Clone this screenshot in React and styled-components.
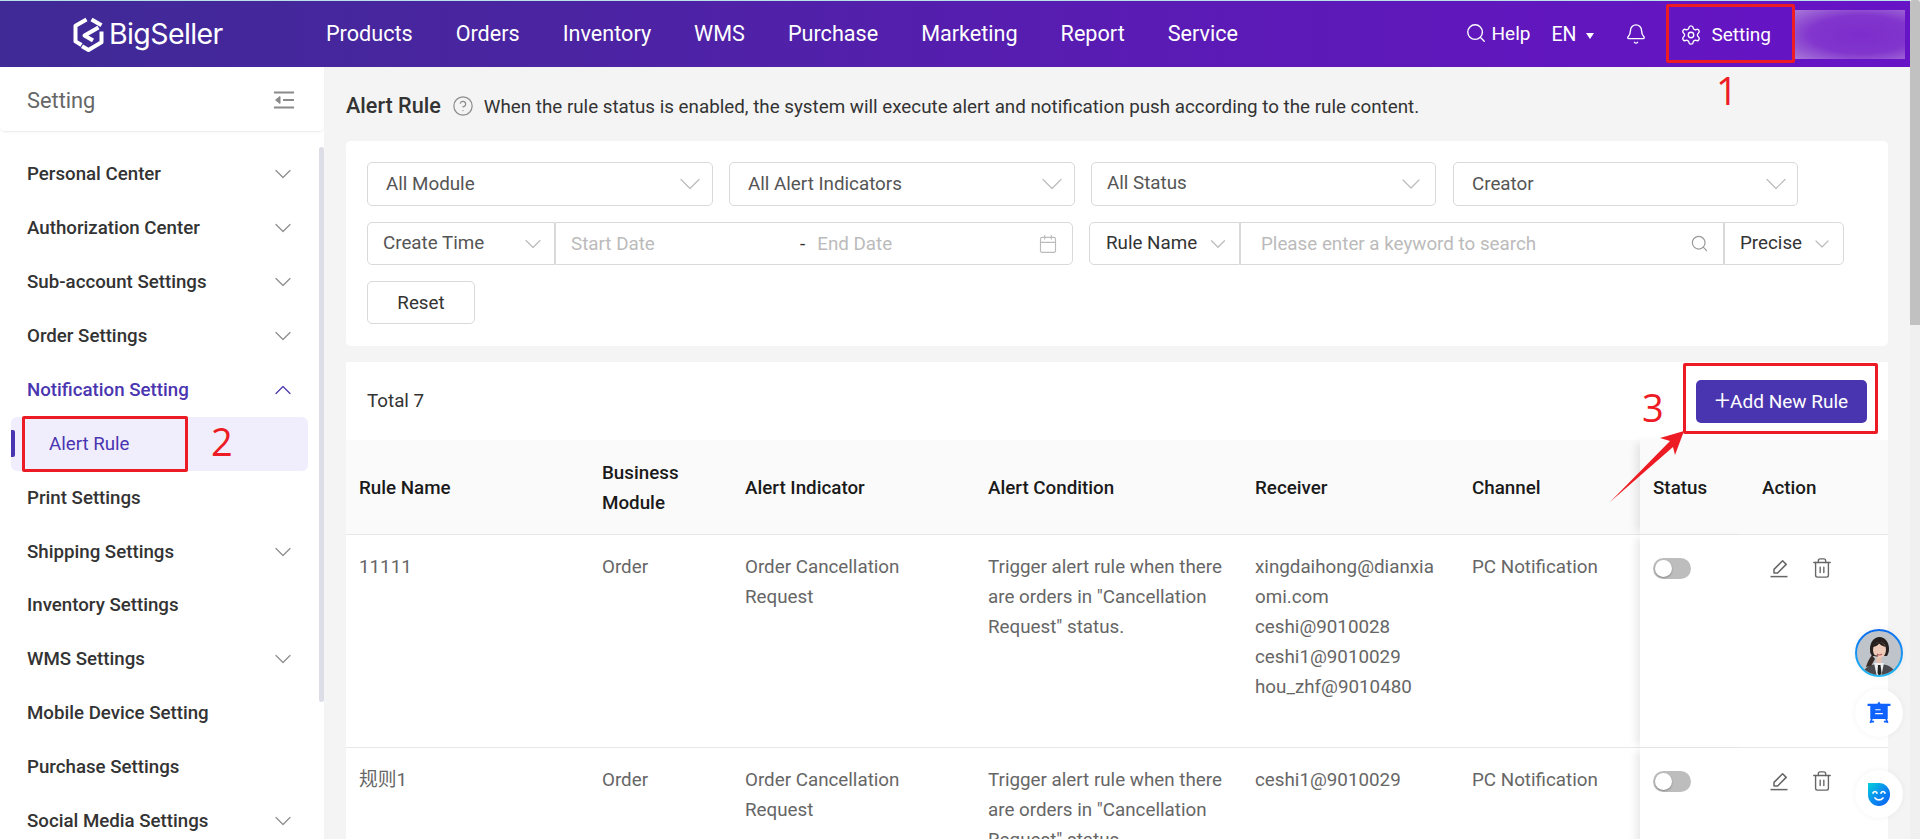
import React from "react";
import styled, { createGlobalStyle } from "styled-components";
import { Search, Bell, Settings, ChevronDown, ChevronUp, CircleHelp, Calendar, Trash2 } from "lucide-react";

const GlobalStyle = createGlobalStyle`
  html, body {
    margin: 0;
    height: 100%;
    overflow: hidden;
    background: #f4f4f4;
    font-family: Roboto, "Noto Sans CJK SC", sans-serif;
  }
  * {
    box-sizing: border-box;
  }
`;

const Shell = styled.div`
  position: relative;
  display: flex;
  height: 839px;
  overflow: hidden;
`;

const Page = styled.div`
  flex: 1;
  min-width: 0;
  display: flex;
  flex-direction: column;
`;

const PageScroll = styled.div`
  width: 10px;
  background: #f0f0f0;
`;

const PageThumb = styled.div`
  height: 325px;
  background: #c1c1c1;
  border-radius: 3px 3px 0 0;
`;

/* top bar */
const TopBar = styled.header`
  height: 67px;
  flex: none;
  display: flex;
  align-items: center;
  padding-left: 73px;
  padding-right: 5px;
  border-top: 1px solid #b8e2e8;
  background: linear-gradient(90deg, #3f2a96 0%, #4b24a2 30%, #5a1bb4 60%, #6713c6 100%);
  color: #fff;
`;

const Logo = styled.div`
  width: 253px;
  flex: none;
  display: flex;
  align-items: center;
  gap: 5px;
`;

const LogoText = styled.span`
  font-family: Inter, sans-serif;
  font-size: 28.5px;
  letter-spacing: -0.6px;
  line-height: 1;
`;

const Nav = styled.nav`
  display: flex;
  gap: 43px;
`;

const NavItem = styled.a`
  font-size: 21.6px;
  line-height: 28px;
  color: #fff;
`;

const TopRight = styled.div`
  margin-left: auto;
  display: flex;
  align-items: center;
`;

const HelpLink = styled.span`
  display: flex;
  align-items: center;
  gap: 5px;
  font-size: 19px;
  margin-right: 21px;
  margin-top: -2px;
`;

const LangPick = styled.span`
  display: flex;
  align-items: center;
  gap: 10px;
  font-size: 19.5px;
  margin-right: 31px;
`;

const Caret = styled.i`
  width: 0;
  height: 0;
  border-left: 4.5px solid transparent;
  border-right: 4.5px solid transparent;
  border-top: 6px solid #fff;
  margin-top: 3px;
`;

const SettingLink = styled.span`
  display: flex;
  align-items: center;
  gap: 9px;
  font-size: 19px;
  margin-left: 33px;
  margin-right: 24px;
  margin-top: 1px;
`;

const BlurBlock = styled.div`
  width: 110px;
  height: 49px;
  background: radial-gradient(ellipse at 60% 50%, #7d2ccc 0%, #8236cd 55%, #a878d8 100%);
`;

/* body */
const Body = styled.div`
  flex: 1;
  display: flex;
  min-height: 0;
`;

const Sidebar = styled.aside`
  position: relative;
  width: 324px;
  flex: none;
  background: #fff;
`;

const SideHead = styled.div`
  height: 65px;
  display: flex;
  align-items: center;
  justify-content: space-between;
  padding: 2px 30px 0 27px;
  border-bottom: 1px solid #eee;
  border-radius: 0 0 5px 5px;
  box-shadow: 0 1px 2px rgba(0, 0, 0, 0.03);
  font-size: 21.8px;
  color: #666;
`;

const SideList = styled.div`
  padding: 15px 0 0 0;
`;

const SideItem = styled.div`
  height: 53.95px;
  display: flex;
  align-items: center;
  justify-content: space-between;
  padding: 0 27px 0 27px;
  font-size: 18.7px;
  font-weight: 500;
  color: ${(p) => (p.$active ? "#4a35b0" : "#333")};
`;

const SubItem = styled.div`
  position: relative;
  height: 53.95px;
  margin: 0 16px 0 11px;
  display: flex;
  align-items: center;
  padding-left: 38px;
  border-radius: 6px;
  background: #f0eefc;
  color: #4a35b0;
  font-size: 18.7px;

  &::before {
    content: "";
    position: absolute;
    left: 0;
    top: 13px;
    width: 4px;
    height: 27px;
    border-radius: 0 2px 2px 0;
    background: #4a35b0;
  }
`;

const SideThumb = styled.div`
  position: absolute;
  top: 80px;
  right: 0;
  width: 5px;
  height: 555px;
  background: #dcdde6;
  border-radius: 3px;
`;

const Main = styled.main`
  flex: 1;
  min-width: 0;
  padding: 0 22px;
`;

const TitleRow = styled.div`
  height: 74px;
  display: flex;
  align-items: center;
  padding-top: 3px;
  color: #333;
`;

const Title = styled.h1`
  margin: 0 11px 0 0;
  font-size: 21.6px;
  font-weight: 500;
  color: #333;
`;

const TitleHint = styled.span`
  margin-left: 10px;
  margin-top: 2px;
  font-size: 18.8px;
  color: #333;
`;

const FilterCard = styled.section`
  height: 205px;
  padding: 21px;
  background: #fff;
  border-radius: 5px;
  margin-bottom: 16px;
`;

const FilterRow = styled.div`
  display: flex;
  margin-bottom: 16px;
`;

const Field = styled.div`
  height: ${(p) => (p.$tall ? 44 : 43)}px;
  width: ${(p) => p.$w}px;
  flex: none;
  display: flex;
  align-items: center;
  justify-content: space-between;
  margin-right: ${(p) => p.$gap || 0}px;
  padding: 0 ${(p) => p.$pr ?? 16}px 0 ${(p) => p.$pl || 18}px;
  border: 1px solid #d9d9d9;
  border-radius: ${(p) => p.$radius || "5px"};
  background: #fff;
  font-size: 18.8px;
  color: ${(p) => p.$color || "#555"};
`;

const FieldLabel = styled.span`
  margin-top: ${(p) => p.$lift || 0}px;
`;

const Muted = styled.span`
  color: #bbb;
`;

const StartText = styled(Muted)`
  width: 227px;
`;

const EndText = styled(Muted)`
  margin-left: 12px;
`;

const DateDash = styled.span`
  margin-left: 2px;
  color: #333;
`;

const DateGroup = styled.div`
  display: flex;
  align-items: center;
`;

const ResetBtn = styled.button`
  width: 108px;
  height: 43px;
  padding: 0;
  border: 1px solid #d9d9d9;
  border-radius: 5px;
  background: #fff;
  color: #333;
  font: 18.8px Roboto, sans-serif;
`;

const TableCard = styled.section`
  background: #fff;
`;

const TableBar = styled.div`
  height: 78px;
  display: flex;
  align-items: center;
  justify-content: space-between;
  padding: 0 21px;
  font-size: 18.8px;
  color: #333;
`;

const TotalLabel = styled.span`
  margin-top: -1px;
`;

const AddBtn = styled.button`
  width: 171px;
  height: 43px;
  padding: 0;
  display: flex;
  align-items: center;
  justify-content: center;
  border: none;
  border-radius: 5px;
  background: #4a35b0;
  color: #fff;
  font: 19px Roboto, sans-serif;
`;

const PlusSign = styled.span`
  font-size: 27px;
  font-weight: 300;
  line-height: 27px;
`;

const Grid = styled.table`
  width: 100%;
  table-layout: fixed;
  border-collapse: separate;
  border-spacing: 0;
`;

const Head = styled.th`
  height: 95px;
  padding: 2px 13px 0;
  text-align: left;
  vertical-align: middle;
  background: #fafafa;
  border-bottom: 1px solid #e8e8e8;
  font-size: 18.8px;
  font-weight: 500;
  line-height: 30px;
  color: #1a1a1a;
  box-shadow: ${(p) => (p.$pinned ? "-7px 0 8px -3px rgba(0,0,0,.09)" : "none")};
`;

const Cell = styled.td`
  padding: 17px ${(p) => (p.$breakAll ? 15 : 13)}px 45px 13px;
  vertical-align: top;
  background: #fff;
  border-bottom: 1px solid #e8e8e8;
  font-size: 18.8px;
  line-height: 30px;
  color: #666;
  word-break: ${(p) => (p.$breakAll ? "break-all" : "normal")};
  box-shadow: ${(p) => (p.$pinned ? "-7px 0 8px -3px rgba(0,0,0,.09)" : "none")};
`;

const Toggle = styled.span`
  display: block;
  position: relative;
  width: 38px;
  height: 21px;
  margin-top: 6px;
  border-radius: 11px;
  background: #bdbdbd;

  &::after {
    content: "";
    position: absolute;
    left: 2px;
    top: 2px;
    width: 17px;
    height: 17px;
    border-radius: 50%;
    background: #fff;
    box-shadow: 0 1px 2px rgba(0, 0, 0, 0.3);
  }
`;

const Actions = styled.div`
  display: flex;
  align-items: center;
  gap: 22px;
  margin: 5px 0 0 7px;
  color: #666;
`;

/* floating widgets */
const FloatDock = styled.div`
  position: absolute;
  right: 17px;
  top: 629px;
  display: flex;
  flex-direction: column;
  align-items: center;
`;

const FloatBtn = styled.div`
  width: 48px;
  height: 48px;
  margin-top: ${(p) => p.$mt || 0}px;
  display: flex;
  align-items: center;
  justify-content: center;
  border-radius: 50%;
  background: #fff;
  box-shadow: 0 0 6px rgba(0, 0, 0, 0.05);
`;

/* red callouts drawn over the page */
const RedBox = styled.div`
  position: absolute;
  border: 3px solid #ed1c24;
  border-radius: 2px;
`;

const Mark1 = styled(RedBox)`
  left: 1666px;
  top: 4px;
  width: 129px;
  height: 59px;
`;

const Mark2 = styled(RedBox)`
  left: 22px;
  top: 416px;
  width: 166px;
  height: 56px;
`;

const Mark3 = styled(RedBox)`
  left: 1683px;
  top: 363px;
  width: 195px;
  height: 71px;
`;

const RedNum = styled.span`
  position: absolute;
  left: ${(p) => p.$x}px;
  top: ${(p) => p.$y}px;
  font-family: "Open Sans", sans-serif;
  font-size: 38px;
  line-height: 38px;
  color: #ed1c24;
`;

const ArrowSvg = styled.svg`
  position: absolute;
  left: 1605px;
  top: 425px;
`;

const navItems = ["Products", "Orders", "Inventory", "WMS", "Purchase", "Marketing", "Report", "Service"];

const menu = [
  { label: "Personal Center", arrow: true },
  { label: "Authorization Center", arrow: true },
  { label: "Sub-account Settings", arrow: true },
  { label: "Order Settings", arrow: true },
  { label: "Notification Setting", open: true },
  { label: "Print Settings" },
  { label: "Shipping Settings", arrow: true },
  { label: "Inventory Settings" },
  { label: "WMS Settings", arrow: true },
  { label: "Mobile Device Setting" },
  { label: "Purchase Settings" },
  { label: "Social Media Settings", arrow: true },
];

const rules = [
  {
    name: "11111",
    module: "Order",
    indicator: "Order Cancellation Request",
    condition: 'Trigger alert rule when there are orders in "Cancellation Request" status.',
    receivers: ["xingdaihong@dianxiaomi.com", "ceshi@9010028", "ceshi1@9010029", "hou_zhf@9010480"],
    channel: "PC Notification",
  },
  {
    name: "规则1",
    module: "Order",
    indicator: "Order Cancellation Request",
    condition: 'Trigger alert rule when there are orders in "Cancellation Request" status.',
    receivers: ["ceshi1@9010029"],
    channel: "PC Notification",
  },
];

const colWidths = [243, 143, 243, 267, 217, 181, 109, 139];

const BrandMark = () => (
  <svg width="31" height="35" viewBox="0 0 31 35" fill="none" stroke="#fff" strokeWidth="4" strokeLinejoin="round">
    <path d="M13.5 2.5 2.5 8.8v15.6l6 3.6" />
    <path d="M18.5 2.5 28.5 8.3" />
    <path d="M25.5 10.5 11.5 18.5l8.5 5" />
    <path d="M28.5 14.5v10.8L15.5 33l-6.5-3.8" />
  </svg>
);

const CollapseIcon = () => (
  <svg width="20" height="18" viewBox="0 0 20 18" fill="none" stroke="#8a8a8a" strokeWidth="1.8">
    <path d="M0 1.5h20M9 9h11M0 16.5h20" />
    <path d="M6 5.5 1.5 9 6 12.5z" fill="#8a8a8a" strokeWidth="1" />
  </svg>
);

const EditIcon = () => (
  <svg width="20" height="20" viewBox="0 0 20 20" fill="none" stroke="currentColor" strokeWidth="1.5" strokeLinejoin="round">
    <path d="M5 15v-3.6L13.6 2.8l3.6 3.6L8.6 15z" />
    <path d="M1.5 18.6h17" />
  </svg>
);

const Agent = () => (
  <svg width="48" height="48" viewBox="0 0 48 48">
    <defs>
      <linearGradient id="agentRing" x1="0" y1="0" x2="0" y2="1">
        <stop offset="0" stopColor="#0a6cf0" />
        <stop offset="1" stopColor="#22b8f5" />
      </linearGradient>
      <clipPath id="agentClip">
        <circle cx="24" cy="24" r="22" />
      </clipPath>
    </defs>
    <circle cx="24" cy="24" r="23" fill="#bfc4cb" stroke="url(#agentRing)" strokeWidth="2" />
    <g clipPath="url(#agentClip)">
      <path d="M7 48c1-9 7-13 17-13s16 4 17 13z" fill="#4a4a4e" />
      <path d="M19 34h10l-3 14h-4z" fill="#eceef0" />
      <path d="M23 36h2.5l1 8-2 4-2-4z" fill="#222" />
      <path d="M15 20c0-7 4-12 9.5-12S34 13 34 20c0 3-1 5-2 7H17c-1-2-2-4-2-7z" fill="#26201e" />
      <path d="M17 26c-3 4-5 8-6 12l5-1 4-7z" fill="#3a2c26" />
      <rect x="21.5" y="26" width="5" height="8" fill="#e6bfae" />
      <ellipse cx="24.5" cy="21" rx="6.5" ry="8" fill="#eecab8" />
      <path d="M17.5 18c2-4 5-5.5 7.5-5 2.500 0 4.500 2 5.500 5-3-1-5-2-6.500-3.500-1 2-3 3-6.500 3.500z" fill="#26201e" />
      <path d="M22 25c1.5 1.2 3.5 1.2 5 0" stroke="#b8555a" strokeWidth="1.1" fill="none" />
      <path d="M16 22c-1 3 2 5 7 5" stroke="#222" strokeWidth="1" fill="none" />
    </g>
  </svg>
);

const BoardIcon = () => (
  <svg width="24" height="24" viewBox="0 0 22 22">
    <path d="M11 0.5 12.5 2.5H21.5V4.5H19V16.5H3V4.5H0.500V2.5H9.500z" fill="#0f62fe" />
    <path d="M7.5 8h5M7.5 11.5h7" stroke="#fff" strokeWidth="1.1" />
    <path d="M4.500 16.500 3 20M4 19h2.500M17.500 16.500l1.500 3.500M18 19h-2.500" stroke="#0f62fe" strokeWidth="1.600" />
  </svg>
);

const SmileIcon = () => (
  <svg width="22" height="23" viewBox="0 0 22 23">
    <defs>
      <linearGradient id="smileFill" x1="0" y1="0" x2="1" y2="1">
        <stop offset="0" stopColor="#06d0d8" />
        <stop offset="0.5" stopColor="#0a8cf0" />
        <stop offset="1" stopColor="#0a5cf0" />
      </linearGradient>
    </defs>
    <path d="M0 0h11a11 11 0 0 1 11 11.5A11 11 0 0 1 11 23 11 11 0 0 1 0 12z" fill="url(#smileFill)" />
    <path d="M5 10c1-2 3-2 4 0M13 10c1-2 3-2 4 0M7 15c2 2.5 6 2.5 8 0" stroke="#fff" strokeWidth="1.7" fill="none" strokeLinecap="round" />
  </svg>
);

// stroke stays about 1.2px whatever the icon size
const Chevron = ({ up, color = "#8c8c8c", size = 28 }) => {
  const Icon = up ? ChevronUp : ChevronDown;
  return <Icon size={size} color={color} strokeWidth={(1.2 * 24) / size} />;
};

const App = () => {
  return (
    <Shell>
      <GlobalStyle />
      <Page>
        <TopBar>
          <Logo>
            <BrandMark />
            <LogoText>BigSeller</LogoText>
          </Logo>
          <Nav>
            {navItems.map((item) => (
              <NavItem key={item}>{item}</NavItem>
            ))}
          </Nav>
          <TopRight>
            <HelpLink>
              <Search size={22} strokeWidth={1.5} />
              Help
            </HelpLink>
            <LangPick>
              EN
              <Caret />
            </LangPick>
            <Bell size={22} strokeWidth={1.5} />
            <SettingLink>
              <Settings size={22} strokeWidth={1.5} />
              Setting
            </SettingLink>
            <BlurBlock />
          </TopRight>
        </TopBar>
        <Body>
          <Sidebar>
            <SideHead>
              Setting
              <CollapseIcon />
            </SideHead>
            <SideList>
              {menu.map((m) => (
                <React.Fragment key={m.label}>
                  <SideItem $active={m.open}>
                    {m.label}
                    {m.arrow && <Chevron />}
                    {m.open && <Chevron up color="#4a35b0" />}
                  </SideItem>
                  {m.open && <SubItem>Alert Rule</SubItem>}
                </React.Fragment>
              ))}
            </SideList>
            <SideThumb />
          </Sidebar>
          <Main>
            <TitleRow>
              <Title>Alert Rule</Title>
              <CircleHelp size={22} color="#8c8c8c" strokeWidth={1.3} />
              <TitleHint>
                When the rule status is enabled, the system will execute alert and notification push according to the rule
                content.
              </TitleHint>
            </TitleRow>
            <FilterCard>
              <FilterRow>
                <Field $tall $w={346} $gap={16} $pr={4}>
                  <FieldLabel>All Module</FieldLabel>
                  <Chevron color="#bbb" size={36} />
                </Field>
                <Field $tall $w={346} $gap={16} $pr={4}>
                  <FieldLabel>All Alert Indicators</FieldLabel>
                  <Chevron color="#bbb" size={36} />
                </Field>
                <Field $tall $w={345} $gap={17} $pl={15} $pr={8}>
                  <FieldLabel $lift={-2}>All Status</FieldLabel>
                  <Chevron color="#bbb" size={32} />
                </Field>
                <Field $tall $w={345} $pr={3}>
                  <FieldLabel>Creator</FieldLabel>
                  <Chevron color="#bbb" size={36} />
                </Field>
              </FilterRow>
              <FilterRow>
                <Field $w={188} $pl={15} $pr={7} $radius="5px 0 0 5px">
                  <FieldLabel $lift={-2}>Create Time</FieldLabel>
                  <Chevron color="#bbb" size={28} />
                </Field>
                <Field $w={518} $gap={16} $pl={15} $pr={14} $radius="0 5px 5px 0">
                  <DateGroup>
                    <StartText>Start Date</StartText>
                    <DateDash>-</DateDash>
                    <EndText>End Date</EndText>
                  </DateGroup>
                  <Calendar size={20} color="#bbb" strokeWidth={1.4} />
                </Field>
                <Field $w={151} $pl={16} $pr={8} $color="#333" $radius="5px 0 0 5px">
                  <FieldLabel $lift={-2}>Rule Name</FieldLabel>
                  <Chevron color="#bbb" size={26} />
                </Field>
                <Field $w={484} $pl={20} $pr={14} $radius="0">
                  <Muted>Please enter a keyword to search</Muted>
                  <Search size={19} color="#999" strokeWidth={1.5} />
                </Field>
                <Field $w={120} $pl={15} $pr={9} $color="#333" $radius="0 5px 5px 0">
                  <FieldLabel $lift={-2}>Precise</FieldLabel>
                  <Chevron color="#bbb" size={24} />
                </Field>
              </FilterRow>
              <ResetBtn>Reset</ResetBtn>
            </FilterCard>
            <TableCard>
              <TableBar>
                <TotalLabel>Total 7</TotalLabel>
                <AddBtn>
                  <PlusSign>+</PlusSign>Add New Rule
                </AddBtn>
              </TableBar>
              <Grid>
                <colgroup>
                  {colWidths.map((w, i) => (
                    <col key={i} width={w} />
                  ))}
                </colgroup>
                <thead>
                  <tr>
                    <Head>Rule Name</Head>
                    <Head>
                      Business
                      <br />
                      Module
                    </Head>
                    <Head>Alert Indicator</Head>
                    <Head>Alert Condition</Head>
                    <Head>Receiver</Head>
                    <Head>Channel</Head>
                    <Head $pinned>Status</Head>
                    <Head>Action</Head>
                  </tr>
                </thead>
                <tbody>
                  {rules.map((r) => (
                    <tr key={r.name}>
                      <Cell>{r.name}</Cell>
                      <Cell>{r.module}</Cell>
                      <Cell>{r.indicator}</Cell>
                      <Cell>{r.condition}</Cell>
                      <Cell $breakAll>
                        {r.receivers.map((x) => (
                          <div key={x}>{x}</div>
                        ))}
                      </Cell>
                      <Cell>{r.channel}</Cell>
                      <Cell $pinned>
                        <Toggle />
                      </Cell>
                      <Cell>
                        <Actions>
                          <EditIcon />
                          <Trash2 size={22} strokeWidth={1.5} />
                        </Actions>
                      </Cell>
                    </tr>
                  ))}
                </tbody>
              </Grid>
            </TableCard>
          </Main>
        </Body>
      </Page>
      <PageScroll>
        <PageThumb />
      </PageScroll>

      <Mark1 />
      <RedNum $x={1716} $y={71}>
        1
      </RedNum>
      <Mark2 />
      <RedNum $x={211} $y={422}>
        2
      </RedNum>
      <Mark3 />
      <RedNum $x={1642} $y={388}>
        3
      </RedNum>
      <ArrowSvg width="82" height="80" viewBox="0 0 82 80">
        <path d="M5 77 65 16 55 13 79 6 70 30 68 22Z" fill="#ed1c24" />
      </ArrowSvg>

      <FloatDock>
        <FloatBtn>
          <Agent />
        </FloatBtn>
        <FloatBtn $mt={12}>
          <BoardIcon />
        </FloatBtn>
        <FloatBtn $mt={33}>
          <SmileIcon />
        </FloatBtn>
      </FloatDock>
    </Shell>
  );
};

export default App;
